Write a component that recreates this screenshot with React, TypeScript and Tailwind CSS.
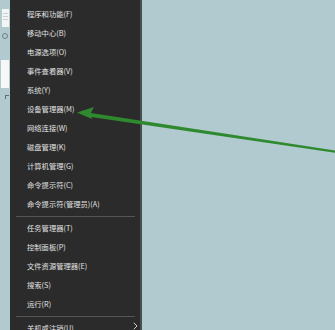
import React from "react";

const group1 = [
  "程序和功能(F)",
  "移动中心(B)",
  "电源选项(O)",
  "事件查看器(V)",
  "系统(Y)",
  "设备管理器(M)",
  "网络连接(W)",
  "磁盘管理(K)",
  "计算机管理(G)",
  "命令提示符(C)",
  "命令提示符(管理员)(A)",
];
const group2 = ["任务管理器(T)", "控制面板(P)", "文件资源管理器(E)", "搜索(S)", "运行(R)"];

function Item({ label, sub }: { label: string; sub?: boolean }) {
  return (
    <div className="h-[19px] flex items-center pl-[17px] pr-[2px] justify-between">
      <span className="text-[7.3px] leading-none text-[#e2e2e2] whitespace-nowrap">{label}</span>
      {sub && (
        <svg width="5" height="8" viewBox="0 0 5 8" className="-mt-[6px]">
          <path d="M0.8 0.8 L4 4 L0.8 7.2" stroke="#cfcfcf" strokeWidth="1" fill="none" />
        </svg>
      )}
    </div>
  );
}

function Sep() {
  return <div className="h-px bg-[#565656] my-[2px] ml-[6px] mr-[5px]" />;
}

export default function App() {
  return (
    <div
      className="relative w-[335px] h-[330px] overflow-hidden bg-[#b1cacf] flex"
      style={{ fontFamily: '"Noto Sans CJK SC", "Noto Sans", sans-serif' }}
    >
      <div className="w-[10px] shrink-0 flex flex-col items-start pt-[9px]">
        <div className="ml-[2px] w-[7px] h-[18px] bg-[#f3f5f5] flex flex-col gap-[2px] p-[1px] pt-[4px]">
          <div className="h-px bg-[#c9cfd1]" />
          <div className="h-px bg-[#c9cfd1]" />
          <div className="h-px bg-[#c9cfd1]" />
        </div>
        <div className="ml-[2px] mt-[6px] w-[6px] h-[6px] rounded-full border border-[#6f8084]" />
        <div className="ml-[1px] mt-[21px] w-[8px] h-[28px] bg-[#f6f7f7]" />
        <div className="ml-[5px] mt-[7px] w-[4px] h-[4px] border-t border-l border-[#5f6f73]" />
      </div>
      <div className="w-[132px] shrink-0 h-full bg-[#2b2b2b] pt-[5px] border-r-[2px] border-[#4c4f50]">
        {group1.map((l) => (
          <Item key={l} label={l} />
        ))}
        <Sep />
        {group2.map((l) => (
          <Item key={l} label={l} />
        ))}
        <Sep />
        <Item label="关机或注销(U)" sub />
      </div>
      <div className="flex-1" />
      <svg className="absolute left-0 top-0" width="335" height="330" viewBox="0 0 335 330">
        <polygon points="86,112.3 335,150.6 335,152.8 86,116.2" fill="#2f8a2f" />
        <polygon points="77,112.6 94,107 90.5,113.6 92,119" fill="#2f8a2f" />
      </svg>
    </div>
  );
}
